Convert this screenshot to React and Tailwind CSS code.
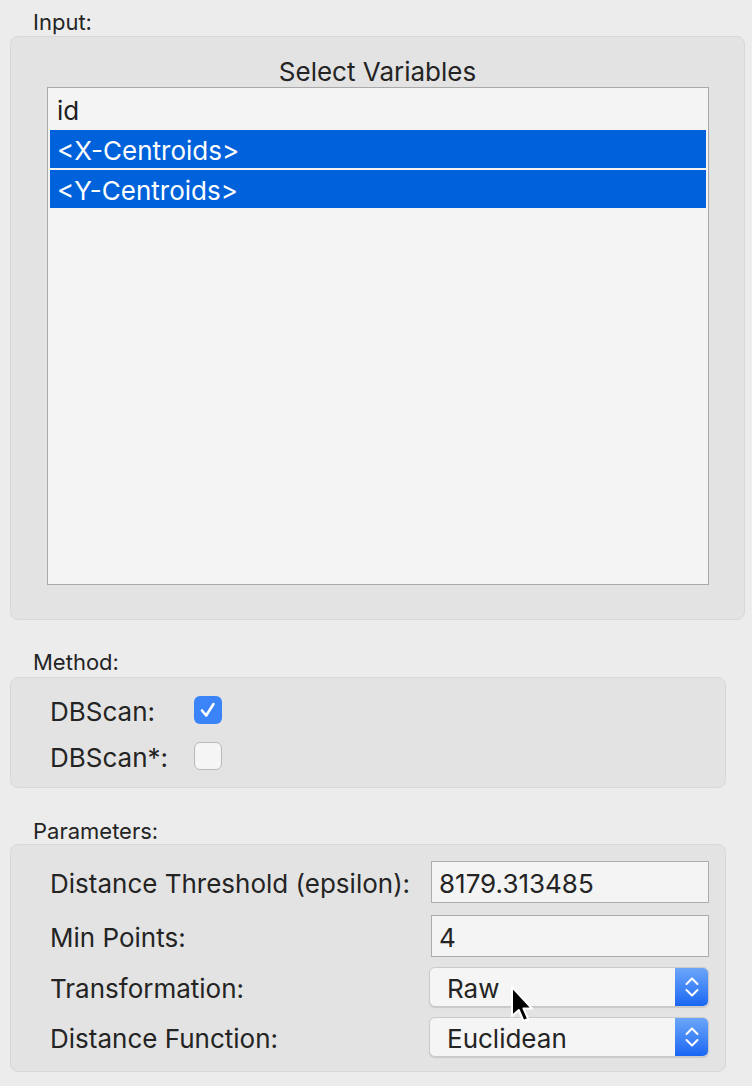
import React from "react";

const variables = [
    { name: "id", selected: false },
    { name: "<X-Centroids>", selected: true },
    { name: "<Y-Centroids>", selected: true },
];

function Checkbox({ checked }) {
    if (checked) {
        return (
            <div className="w-[28px] h-[28px] rounded-[6px] bg-[#3a84f7] flex items-center justify-center">
                <svg width="20" height="20" viewBox="0 0 20 20">
                    <path d="M4 10.5 L8.2 15.5 L15.5 4" fill="none" stroke="white" strokeWidth="2.6" strokeLinecap="round" strokeLinejoin="round" />
                </svg>
            </div>
        );
    }
    return <div className="w-[28px] h-[28px] rounded-[6px] bg-[#f5f5f5] border border-[#b9b9b9]" />;
}

function Select({ value }) {
    return (
        <div className="w-[280px] h-[40px] flex rounded-[6px] bg-[#f5f5f5] border border-[#cacaca] shadow-[0_1px_1px_rgba(0,0,0,0.12)] overflow-hidden">
            <div className="flex-1 flex items-center pl-[17px] pt-[3px] text-[26px] leading-[32px] text-[#242424]">{value}</div>
            <div className="w-[33px] h-full bg-gradient-to-b from-[#6ca5f8] to-[#1766f3] flex items-center justify-center">
                <svg width="16" height="26" viewBox="0 0 16 26">
                    <path d="M2.5 10 L8 4.5 L13.5 10" fill="none" stroke="white" strokeWidth="2" strokeLinecap="round" strokeLinejoin="round" />
                    <path d="M2.5 16 L8 21.5 L13.5 16" fill="none" stroke="white" strokeWidth="2" strokeLinecap="round" strokeLinejoin="round" />
                </svg>
            </div>
        </div>
    );
}

function TextField({ value }) {
    return (
        <div className="ml-[2px] w-[278px] h-[42px] flex items-center pl-[7px] pt-[3px] bg-[#f4f4f4] border border-[#acacac] text-[26px] leading-[32px] text-[#242424]">
            {value}
        </div>
    );
}

function ParamLabel({ children }) {
    return <div className="w-[379px] pt-[3px] text-[26px] leading-[32px]">{children}</div>;
}

export default function App() {
    return (
        <div className="relative w-[752px] h-[1086px] bg-[#ececec] pl-[10px] pt-[10px] font-['Inter',sans-serif] text-[#242424]">
            {/* Input */}
            <div className="pl-[23px] text-[22px] leading-[24px]">Input:</div>
            <div className="mt-[2px] w-[735px] h-[584px] rounded-[8px] bg-[#e3e3e3] border border-[#d8d8d8] pt-[20px]">
                <div className="text-center text-[26px] leading-[30px]">Select Variables</div>
                <div className="ml-[36px] w-[662px] h-[498px] bg-[#f4f4f4] border border-[#a9a9a9] p-[2px] flex flex-col gap-[2px]">
                    {variables.map((v) => (
                        <div
                            key={v.name}
                            className={
                                v.selected
                                    ? "h-[38px] flex items-center pl-[7px] pt-[4px] text-[26px] leading-[32px] bg-[#0062db] text-white"
                                    : "h-[38px] flex items-center pl-[7px] pt-[4px] text-[26px] leading-[32px] text-[#1e1e1e]"
                            }
                        >
                            {v.name}
                        </div>
                    ))}
                </div>
            </div>

            {/* Method */}
            <div className="mt-[30px] pl-[23px] text-[22px] leading-[24px]">Method:</div>
            <div className="mt-[3px] w-[716px] h-[111px] rounded-[8px] bg-[#e3e3e3] border border-[#d8d8d8] pt-[18px] pl-[39px] flex flex-col gap-[18px]">
                <div className="h-[28px] flex items-center">
                    <div className="w-[144px] pt-[3px] text-[26px] leading-[32px]">DBScan:</div>
                    <Checkbox checked />
                </div>
                <div className="h-[28px] flex items-center">
                    <div className="w-[144px] pt-[3px] text-[26px] leading-[32px]">DBScan*:</div>
                    <Checkbox checked={false} />
                </div>
            </div>

            {/* Parameters */}
            <div className="mt-[31px] pl-[23px] text-[22px] leading-[24px]">Parameters:</div>
            <div className="mt-[1px] w-[716px] h-[228px] rounded-[8px] bg-[#e3e3e3] border border-[#d8d8d8] pt-[16px] pl-[39px] flex flex-col">
                <div className="flex items-center">
                    <ParamLabel>Distance Threshold (epsilon):</ParamLabel>
                    <TextField value="8179.313485" />
                </div>
                <div className="mt-[12px] flex items-center">
                    <ParamLabel>Min Points:</ParamLabel>
                    <TextField value="4" />
                </div>
                <div className="mt-[10px] flex items-center">
                    <ParamLabel>Transformation:</ParamLabel>
                    <Select value="Raw" />
                </div>
                <div className="mt-[10px] flex items-center">
                    <ParamLabel>Distance Function:</ParamLabel>
                    <Select value="Euclidean" />
                </div>
            </div>

            {/* mouse pointer over the Transformation select */}
            <svg className="absolute left-[509px] top-[985px]" width="26" height="42" viewBox="0 0 26 42">
                <path d="M3 2 L3 31 L9.8 25 L14.5 36 L19.2 34 L14.5 23.5 L23 23.5 Z" fill="black" stroke="white" strokeWidth="2" strokeLinejoin="round" />
            </svg>
        </div>
    );
}
